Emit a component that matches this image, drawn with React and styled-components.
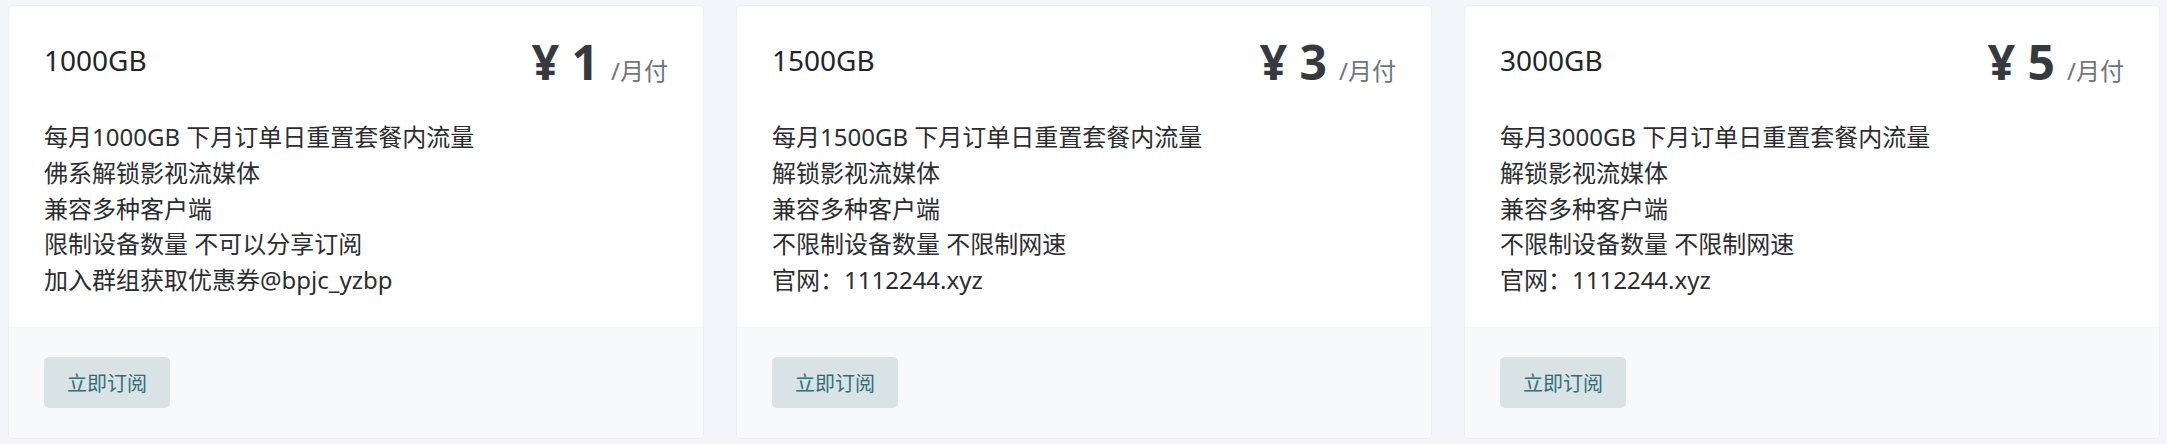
import React from "react";
import styled, { createGlobalStyle } from "styled-components";

const GlobalStyle = createGlobalStyle`
  html, body {
    margin: 0;
    padding: 0;
    background: #f4f5fa;
  }
  body {
    font-family: "Noto Sans", "Noto Sans CJK SC", sans-serif;
    color: #303133;
  }
`;

const Page = styled.div`
  display: grid;
  grid-template-columns: repeat(3, 696px);
  column-gap: 32px;
  padding: 5px 7px 5px 8px;
  background: #f4f5fa;
`;

const Card = styled.div`
  display: flex;
  flex-direction: column;
  height: 434px;
  box-sizing: border-box;
  background: #ffffff;
  border: 1px solid #eceef4;
  border-radius: 5px;
  overflow: hidden;
`;

const CardBody = styled.div`
  flex: 1;
  padding: 29px 35px 0 35px;
`;

const Header = styled.div`
  display: flex;
  align-items: center;
  justify-content: space-between;
  height: 54px;
`;

const Title = styled.div`
  font-size: 28px;
  line-height: 36px;
  color: #212529;
  margin-top: -4px;
`;

const Price = styled.div`
  display: flex;
  align-items: baseline;
  color: #343a40;
`;

const Amount = styled.span`
  font-size: 48px;
  font-weight: 700;
  line-height: 54px;
`;

const Period = styled.span`
  margin-left: 12px;
  font-size: 24px;
  color: #6c757d;
`;

const Features = styled.ul`
  list-style: none;
  margin: 30px 0 0;
  padding: 0;
`;

const Feature = styled.li`
  font-size: 24px;
  line-height: 35.75px;
  color: #2b2d30;
`;

const Footer = styled.div`
  height: 111px;
  box-sizing: border-box;
  padding: 30px 35px;
  background: #f8f9fb;
`;

const Button = styled.button`
  display: inline-flex;
  align-items: center;
  justify-content: center;
  height: 51px;
  padding: 0 23px;
  border: none;
  border-radius: 5px;
  background: #d9e2e5;
  color: #2f6f7b;
  font-family: "Noto Sans CJK SC", sans-serif;
  font-size: 20px;
  cursor: pointer;
`;

const plans = [
  {
    title: "1000GB",
    price: "1",
    features: [
      "每月1000GB 下月订单日重置套餐内流量",
      "佛系解锁影视流媒体",
      "兼容多种客户端",
      "限制设备数量 不可以分享订阅",
      "加入群组获取优惠券@bpjc_yzbp",
    ],
  },
  {
    title: "1500GB",
    price: "3",
    features: [
      "每月1500GB 下月订单日重置套餐内流量",
      "解锁影视流媒体",
      "兼容多种客户端",
      "不限制设备数量 不限制网速",
      "官网：1112244.xyz",
    ],
  },
  {
    title: "3000GB",
    price: "5",
    features: [
      "每月3000GB 下月订单日重置套餐内流量",
      "解锁影视流媒体",
      "兼容多种客户端",
      "不限制设备数量 不限制网速",
      "官网：1112244.xyz",
    ],
  },
];

export default function App() {
  return (
    <>
      <GlobalStyle />
      <Page>
        {plans.map((p) => (
          <Card key={p.title}>
            <CardBody>
              <Header>
                <Title>{p.title}</Title>
                <Price>
                  <Amount>¥ {p.price}</Amount>
                  <Period>/月付</Period>
                </Price>
              </Header>
              <Features>
                {p.features.map((f) => (
                  <Feature key={f}>{f}</Feature>
                ))}
              </Features>
            </CardBody>
            <Footer>
              <Button>立即订阅</Button>
            </Footer>
          </Card>
        ))}
      </Page>
    </>
  );
}
